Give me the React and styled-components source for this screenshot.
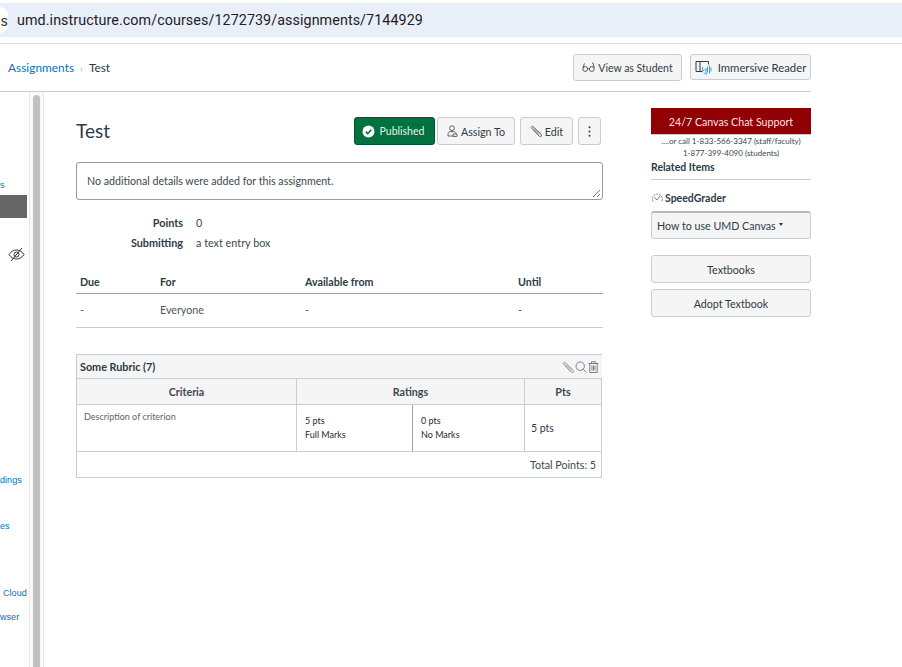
import styled, { createGlobalStyle } from 'styled-components';

const GlobalStyle = createGlobalStyle`
  html, body { margin: 0; padding: 0; background: #fff; height: 100%; overflow: hidden; }
  body { font-family: Lato, "Open Sans", sans-serif; color: #2d3b45; }
  * { box-sizing: border-box; }
`;

const Page = styled.div`
  width: 902px;
  height: 667px;
  display: flex;
  flex-direction: column;
  overflow: hidden;
`;

// --- browser bar ---
const BrowserBar = styled.div`
  height: 44px;
  padding-top: 3px;
  border-bottom: 1px solid #dcdcdc;
  flex-shrink: 0;
`;

const UrlPill = styled.div`
  height: 34px;
  background: #e9eff9;
  display: flex;
  align-items: center;
  gap: 9px;
`;

const SiteBadge = styled.div`
  width: 8px;
  height: 26px;
  background: #fff;
  border-radius: 0 13px 13px 0;
  font: 14px Inter, sans-serif;
  color: #333;
  display: flex;
  align-items: center;
  justify-content: flex-end;
  overflow: hidden;
`;

const UrlText = styled.div`
  font: 14.3px Roboto, Inter, sans-serif;
  letter-spacing: 0.08px;
  color: #1f2124;
`;

// --- canvas header ---
const TopBar = styled.div`
  width: 811px;
  height: 48px;
  border-bottom: 1px solid #c7cdd1;
  display: flex;
  align-items: center;
  justify-content: space-between;
  flex-shrink: 0;
`;

const Crumbs = styled.div`
  display: flex;
  align-items: center;
  font-size: 11.9px;
  padding-left: 8px;
`;

const CrumbLink = styled.a`
  color: #0374b5;
`;

const CrumbSep = styled.span`
  color: #a5afb5;
  font-size: 10px;
  margin: 0 6px;
`;

const TopActions = styled.div`
  display: flex;
  gap: 8px;
`;

const Button = styled.div`
  height: ${({ $h }) => $h || 28}px;
  width: ${({ $w }) => ($w ? `${$w}px` : 'auto')};
  background: #f5f5f5;
  border: 1px solid #c7cdd1;
  border-radius: 3px;
  display: flex;
  align-items: center;
  justify-content: center;
  gap: ${({ $gap }) => $gap ?? 3}px;
  font-size: ${({ $size }) => $size || 10.7}px;
  color: #2d3b45;
  white-space: nowrap;
`;

const Body = styled.div`
  flex: 1;
  display: flex;
  min-height: 0;
`;

// --- clipped course nav ---
const SideNav = styled.nav`
  width: 29px;
  flex-shrink: 0;
  display: flex;
  flex-direction: column;
  overflow: hidden;
`;

const NavLink = styled.a`
  height: 14px;
  font: 9.1px/14px "Liberation Sans", sans-serif;
  color: #0374b5;
  margin-top: ${({ $top }) => $top}px;
  padding-left: ${({ $left }) => $left || 0}px;
  white-space: nowrap;
`;

const NavActive = styled.div`
  width: 27px;
  height: 23px;
  background: #666;
  margin-top: 3px;
`;

const HiddenIcon = styled.div`
  margin: 28px 0 0 8px;
  height: 16px;
`;

const Gutter = styled.div`
  width: 15px;
  flex-shrink: 0;
  background: #fafafa;
  border-left: 1px solid #e8e8e8;
  border-right: 1px solid #e8e8e8;
  padding: 3px 3px 0;
`;

const Thumb = styled.div`
  height: 100%;
  background: #c1c1c1;
  border-radius: 4px 4px 0 0;
`;

// --- main content ---
const Main = styled.main`
  width: 527px;
  margin-left: 32px;
  flex-shrink: 0;
`;

const TitleRow = styled.div`
  display: flex;
  align-items: center;
  height: 28px;
  margin-top: 25px;
`;

const Title = styled.h1`
  flex: 1;
  margin: 0 0 2px;
  font-size: 19px;
  font-weight: 400;
  color: #2d3b45;
`;

const PublishedButton = styled(Button)`
  background: #00713f;
  border-color: #00552f;
  color: #e6f2ec;
  width: 81px;
  gap: 5px;
  padding-right: 3px;
  font-size: 10.5px;
`;

const ActionGap = styled.div`
  width: ${({ $w }) => $w}px;
`;

const DetailsBox = styled.div`
  position: relative;
  height: 38px;
  margin-top: 17px;
  border: 1px solid #9b9b9b;
  border-radius: 3px;
  padding: 0 0 1px 10px;
  display: flex;
  align-items: center;
  font-size: 10.65px;
  color: #3b4850;
`;

const Grip = styled.svg`
  position: absolute;
  right: 1px;
  bottom: 1px;
`;

const Facts = styled.dl`
  display: grid;
  grid-template-columns: 107px 1fr;
  column-gap: 13px;
  row-gap: 6px;
  margin: 16px 0 0;
  font-size: 10.8px;
  line-height: 14px;
`;

const FactLabel = styled.dt`
  text-align: right;
  font-weight: 700;
`;

const FactValue = styled.dd`
  margin: 0;
  color: #3b4850;
`;

const DatesGrid = styled.div`
  display: grid;
  grid-template-columns: 80px 145px 213px 1fr;
  margin-top: 19px;
  font-size: 10.7px;
`;

const DateHead = styled.div`
  height: 25px;
  padding: 1px 0 0 4px;
  display: flex;
  align-items: center;
  font-weight: 700;
  border-bottom: 1px solid #9aa5ad;
`;

const DateCell = styled.div`
  height: 34px;
  padding: 0 0 3px 4px;
  display: flex;
  align-items: center;
  color: #4a565e;
  border-bottom: 1px solid #c7cdd1;
`;

const Rubric = styled.section`
  width: 526px;
  margin-top: 26px;
  border: 1px solid #c7cdd1;
`;

const RubricTitle = styled.div`
  height: 24px;
  background: #f5f5f5;
  margin-right: -1px;
  border-bottom: 1px solid #c7cdd1;
  display: flex;
  align-items: center;
  justify-content: space-between;
  padding: 0 3px;
  font-size: 10.8px;
  font-weight: 700;
`;

const RubricTools = styled.div`
  display: flex;
  gap: 1px;
  align-items: center;
`;

const RubricGrid = styled.div`
  display: grid;
  grid-template-columns: 219px 116px 112px 1fr;
`;

const RubricHead = styled.div`
  height: 26px;
  background: #f5f5f5;
  border-bottom: 1px solid #c7cdd1;
  border-left: ${({ $first }) => ($first ? 'none' : '1px solid #c7cdd1')};
  grid-column: span ${({ $span }) => $span || 1};
  display: flex;
  align-items: center;
  justify-content: center;
  font-size: 10.7px;
  font-weight: 700;
  color: #3b4850;
`;

const Criterion = styled.div`
  height: 47px;
  padding: 6px 7px;
  font-size: 9px;
  line-height: 12px;
  color: #5a666e;
  border-bottom: 1px solid #c7cdd1;
`;

const Rating = styled.div`
  height: 47px;
  padding: 9px 0 0 8px;
  font-size: 9px;
  line-height: 14px;
  color: #1f2a32;
  border-left: 1px solid ${({ $dark }) => ($dark ? '#9aa5ad' : '#c7cdd1')};
  border-bottom: 1px solid #c7cdd1;
`;

const PtsCell = styled.div`
  height: 47px;
  padding-left: 6px;
  display: flex;
  align-items: center;
  font-size: 10.5px;
  border-left: 1px solid #c7cdd1;
  border-bottom: 1px solid #c7cdd1;
`;

const RubricTotal = styled.div`
  height: 25px;
  padding-right: 5px;
  display: flex;
  align-items: center;
  justify-content: flex-end;
  font-size: 10.7px;
  color: #3b4850;
`;

// --- right column ---
const Aside = styled.aside`
  width: 160px;
  margin-left: 48px;
  flex-shrink: 0;
  padding-top: 16px;
`;

const ChatButton = styled.div`
  height: 27px;
  background: #900005;
  border-bottom: 1px solid #c7cdd1;
  color: #f4e3e3;
  font-size: 10.65px;
  display: flex;
  align-items: center;
  justify-content: center;
`;

const CallNote = styled.div`
  text-align: center;
  font-size: 8px;
  line-height: 12px;
  color: #3b4850;
`;

const RelatedTitle = styled.h2`
  margin: 1px 0 0;
  height: 20px;
  font-size: 10.5px;
  line-height: 14px;
  font-weight: 700;
  border-bottom: 1px solid #c7cdd1;
`;

const SpeedGrader = styled.div`
  display: flex;
  align-items: center;
  gap: 1px;
  margin-top: 11px;
  height: 14px;
  font-size: 10.5px;
  font-weight: 700;
`;

const Dropdown = styled(Button)`
  margin-top: 6px;
  border-top: 2px solid #b4bbc0;
  justify-content: flex-start;
  padding-left: 5px;
  gap: 3px;
`;

const Caret = styled.span`
  width: 0;
  height: 0;
  border-left: 2.5px solid transparent;
  border-right: 2.5px solid transparent;
  border-top: 3px solid #2d3b45;
  margin-bottom: 2px;
`;

const SideButton = styled(Button)`
  margin-top: ${({ $top }) => $top}px;
`;

// --- icons ---
const Glasses = () => (
  <svg width="13" height="11" viewBox="0 0 13 11" fill="none" stroke="#3b4850" strokeWidth="0.9">
    <circle cx="3.2" cy="7" r="2.4" />
    <circle cx="9.8" cy="7" r="2.4" />
    <path d="M5.6 7c.5-.6 1.3-.6 1.8 0M1 6l1.4-4.6M12.2 6 11.2 1.4 10 1" />
  </svg>
);

const Reader = () => (
  <svg width="17" height="15" viewBox="0 0 17 15" fill="none">
    <path d="M9 1.5H1v10h6.5M5 1.500v10M9 1.500h4.500v3" stroke="#2d3b45" strokeWidth="1" />
    <path d="M7.500 7v3.500h1.500l2-2v6l-2-2M12.500 6.500v6M14.500 5.500v8M16 7.500v4" stroke="#3f9fdf" strokeWidth="1" />
  </svg>
);

const CheckCircle = () => (
  <svg width="13" height="13" viewBox="0 0 13 13">
    <circle cx="6.500" cy="6.500" r="6" fill="#fff" />
    <path d="M3.700 6.600l2 2 3.600-3.800" fill="none" stroke="#00713f" strokeWidth="1.500" />
  </svg>
);

const PersonIcon = () => (
  <svg width="11" height="12" viewBox="0 0 11 12" fill="none" stroke="#3b4850" strokeWidth="0.8">
    <circle cx="5" cy="3.200" r="2.400" />
    <path d="M1 11V8.600C1 7.500 2 7 3 6.600h4C8 7 9 7.500 9 8.600V11z" />
    <path d="M6 9h4v2.400H6z" fill="#f5f5f5" />
  </svg>
);

const Pencil = ({ size = 12, color = '#5a666e' }) => (
  <svg width={size} height={size} viewBox="0 0 12 12" fill="none" stroke={color} strokeWidth="0.9">
    <path d="M1 2.400 2.400 1l9 8.200-.1 2.100-2.100 0z" />
    <path d="M2.200 3.400 3.500 2.100M4 3.600l5.800 5.600M2.900 4.600l5.800 5.600" />
  </svg>
);

const Dots = () => (
  <svg width="3" height="11" viewBox="0 0 3 11" fill="#2d3b45">
    <circle cx="1.500" cy="1.300" r="1" />
    <circle cx="1.500" cy="5.500" r="1" />
    <circle cx="1.500" cy="9.700" r="1" />
  </svg>
);

const EyeOff = () => (
  <svg width="17" height="15" viewBox="0 0 17 15" fill="none" stroke="#333" strokeWidth="1">
    <path d="M1 7.500c2-3 4.500-4.500 7.500-4.500s5.500 1.500 7.500 4.500c-2 3-4.500 4.500-7.500 4.500S3 10.500 1 7.500z" />
    <circle cx="8.500" cy="7.500" r="2.500" />
    <path d="M14 1 3 14" />
  </svg>
);

const SpeedIcon = () => (
  <svg width="13" height="11" viewBox="0 0 13 11" fill="none" stroke="#5a666e" strokeWidth="0.8">
    <path d="M2 8.500A5 5 0 1 1 11 8" strokeDasharray="2 1" />
    <path d="M3.500 4.500l2.500 2.500 3-4" />
  </svg>
);

const SearchIcon = () => (
  <svg width="12" height="12" viewBox="0 0 12 12" fill="none" stroke="#6b777f" strokeWidth="0.9">
    <circle cx="5.200" cy="5.200" r="4.200" />
    <path d="m8.300 8.300 3.200 3.200" />
  </svg>
);

const TrashIcon = () => (
  <svg width="11" height="12" viewBox="0 0 11 12" fill="none" stroke="#6b777f" strokeWidth="0.9">
    <path d="M0.500 2.500h10M3.500 2.500V.8h4v1.700M1.800 2.500v9h7.400v-9M4 4.500v5M5.500 4.500v5M7 4.500v5" />
  </svg>
);

export default function App() {
  return (
    <Page>
      <GlobalStyle />
      <BrowserBar>
        <UrlPill>
          <SiteBadge>s</SiteBadge>
          <UrlText>umd.instructure.com/courses/1272739/assignments/7144929</UrlText>
        </UrlPill>
      </BrowserBar>

      <TopBar>
        <Crumbs>
          <CrumbLink>Assignments</CrumbLink>
          <CrumbSep>›</CrumbSep>
          <span>Test</span>
        </Crumbs>
        <TopActions>
          <Button $w={109} $h={27} $size={10.5}><Glasses />View as Student</Button>
          <Button $w={121} $h={26} $gap={6} $size={11.3}><Reader />Immersive Reader</Button>
        </TopActions>
      </TopBar>

      <Body>
        <SideNav>
          <NavLink $top={86}>s</NavLink>
          <NavActive />
          <HiddenIcon><EyeOff /></HiddenIcon>
          <NavLink $top={211}>dings</NavLink>
          <NavLink $top={32}>es</NavLink>
          <NavLink $top={53} $left={3}>Cloud</NavLink>
          <NavLink $top={10}>wser</NavLink>
        </SideNav>
        <Gutter><Thumb /></Gutter>

        <Main>
          <TitleRow>
            <Title>Test</Title>
            <PublishedButton><CheckCircle />Published</PublishedButton>
            <ActionGap $w={2} />
            <Button $w={78}><PersonIcon />Assign To</Button>
            <ActionGap $w={5} />
            <Button $w={53}><Pencil />Edit</Button>
            <ActionGap $w={5} />
            <Button $w={23}><Dots /></Button>
            <ActionGap $w={2} />
          </TitleRow>

          <DetailsBox>
            No additional details were added for this assignment.
            <Grip width="9" height="9" viewBox="0 0 9 9" stroke="#555" strokeWidth="0.8">
              <path d="M1 8 8 1M5 8l3-3" />
            </Grip>
          </DetailsBox>

          <Facts>
            <FactLabel>Points</FactLabel>
            <FactValue>0</FactValue>
            <FactLabel>Submitting</FactLabel>
            <FactValue>a text entry box</FactValue>
          </Facts>

          <DatesGrid>
            <DateHead>Due</DateHead>
            <DateHead>For</DateHead>
            <DateHead>Available from</DateHead>
            <DateHead>Until</DateHead>
            <DateCell>-</DateCell>
            <DateCell>Everyone</DateCell>
            <DateCell>-</DateCell>
            <DateCell>-</DateCell>
          </DatesGrid>

          <Rubric>
            <RubricTitle>
              Some Rubric (7)
              <RubricTools>
                <Pencil size={12} color="#8a969e" />
                <SearchIcon />
                <TrashIcon />
              </RubricTools>
            </RubricTitle>
            <RubricGrid>
              <RubricHead $first>Criteria</RubricHead>
              <RubricHead $span={2}>Ratings</RubricHead>
              <RubricHead>Pts</RubricHead>
              <Criterion>Description of criterion</Criterion>
              <Rating>5 pts<br />Full Marks</Rating>
              <Rating $dark>0 pts<br />No Marks</Rating>
              <PtsCell>5 pts</PtsCell>
            </RubricGrid>
            <RubricTotal>Total Points: 5</RubricTotal>
          </Rubric>
        </Main>

        <Aside>
          <ChatButton>24/7 Canvas Chat Support</ChatButton>
          <CallNote>
            ....or call 1-833-566-3347 (staff/faculty)<br />
            1-877-399-4090 (students)
          </CallNote>
          <RelatedTitle>Related Items</RelatedTitle>
          <SpeedGrader><SpeedIcon />SpeedGrader</SpeedGrader>
          <Dropdown>How to use UMD Canvas <Caret /></Dropdown>
          <SideButton $top={16}>Textbooks</SideButton>
          <SideButton $top={6}>Adopt Textbook</SideButton>
        </Aside>
      </Body>
    </Page>
  );
}
